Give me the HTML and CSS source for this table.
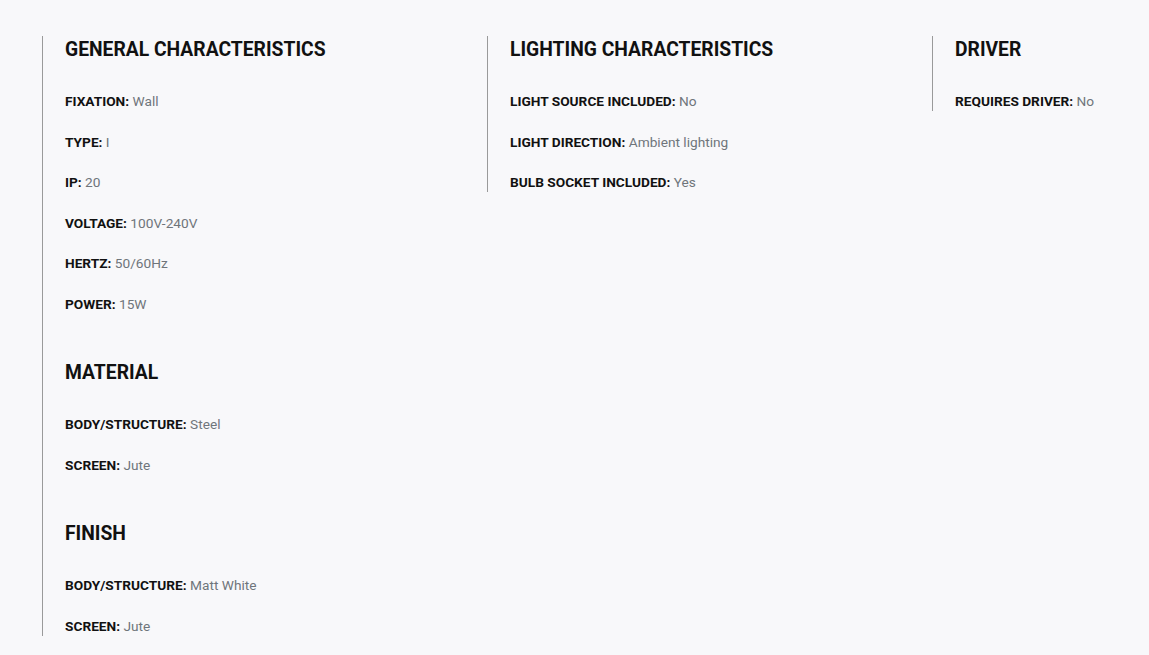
FILE: index.html
```html
<!DOCTYPE html>
<html lang="en">
<head>
<meta charset="utf-8">
<title>Specifications</title>
<link rel="stylesheet" href="styles.css">
</head>
<body>
<div class="specs">
  <div class="col">
    <section class="group">
      <h3 class="group-title">GENERAL CHARACTERISTICS</h3>
      <ul class="rows">
        <li class="row"><span class="label">FIXATION:</span> <span class="value">Wall</span></li>
        <li class="row"><span class="label">TYPE:</span> <span class="value">I</span></li>
        <li class="row"><span class="label">IP:</span> <span class="value">20</span></li>
        <li class="row"><span class="label">VOLTAGE:</span> <span class="value">100V-240V</span></li>
        <li class="row"><span class="label">HERTZ:</span> <span class="value">50/60Hz</span></li>
        <li class="row"><span class="label">POWER:</span> <span class="value">15W</span></li>
      </ul>
    </section>
    <section class="group">
      <h3 class="group-title">MATERIAL</h3>
      <ul class="rows">
        <li class="row"><span class="label">BODY/STRUCTURE:</span> <span class="value">Steel</span></li>
        <li class="row"><span class="label">SCREEN:</span> <span class="value">Jute</span></li>
      </ul>
    </section>
    <section class="group">
      <h3 class="group-title">FINISH</h3>
      <ul class="rows">
        <li class="row"><span class="label">BODY/STRUCTURE:</span> <span class="value">Matt White</span></li>
        <li class="row"><span class="label">SCREEN:</span> <span class="value">Jute</span></li>
      </ul>
    </section>
  </div>
  <div class="col">
    <section class="group">
      <h3 class="group-title">LIGHTING CHARACTERISTICS</h3>
      <ul class="rows">
        <li class="row"><span class="label">LIGHT SOURCE INCLUDED:</span> <span class="value">No</span></li>
        <li class="row"><span class="label">LIGHT DIRECTION:</span> <span class="value">Ambient lighting</span></li>
        <li class="row"><span class="label">BULB SOCKET INCLUDED:</span> <span class="value">Yes</span></li>
      </ul>
    </section>
  </div>
  <div class="col">
    <section class="group">
      <h3 class="group-title">DRIVER</h3>
      <ul class="rows">
        <li class="row"><span class="label">REQUIRES DRIVER:</span> <span class="value">No</span></li>
      </ul>
    </section>
  </div>
</div>
</body>
</html>
```
FILE: styles.css
```css
html, body {
  margin: 0;
  padding: 0;
  background: #f8f8fa;
}
body {
  font-family: Roboto, "Liberation Sans", Arial, sans-serif;
  color: #111;
}
.specs {
  display: grid;
  grid-template-columns: 445px 445px 1fr;
  align-items: start;
  padding: 36px 0 0 42px;
}
.col {
  border-left: 1px solid #9a9a9a;
  padding-left: 22px;
  display: flex;
  flex-direction: column;
  gap: 45.5px;
}
.group-title {
  margin: 0;
  padding-top: 1px;
  font-size: 19.3px;
  line-height: 26px;
  font-weight: 700;
  color: #111;
}
.rows {
  list-style: none;
  margin: 28px 0 0;
  padding: 0;
  display: flex;
  flex-direction: column;
  gap: 20.5px;
}
.row {
  font-size: 13.7px;
  line-height: 20px;
}
.label {
  font-weight: 700;
  color: #111;
}
.value {
  color: #6f757b;
}
```
